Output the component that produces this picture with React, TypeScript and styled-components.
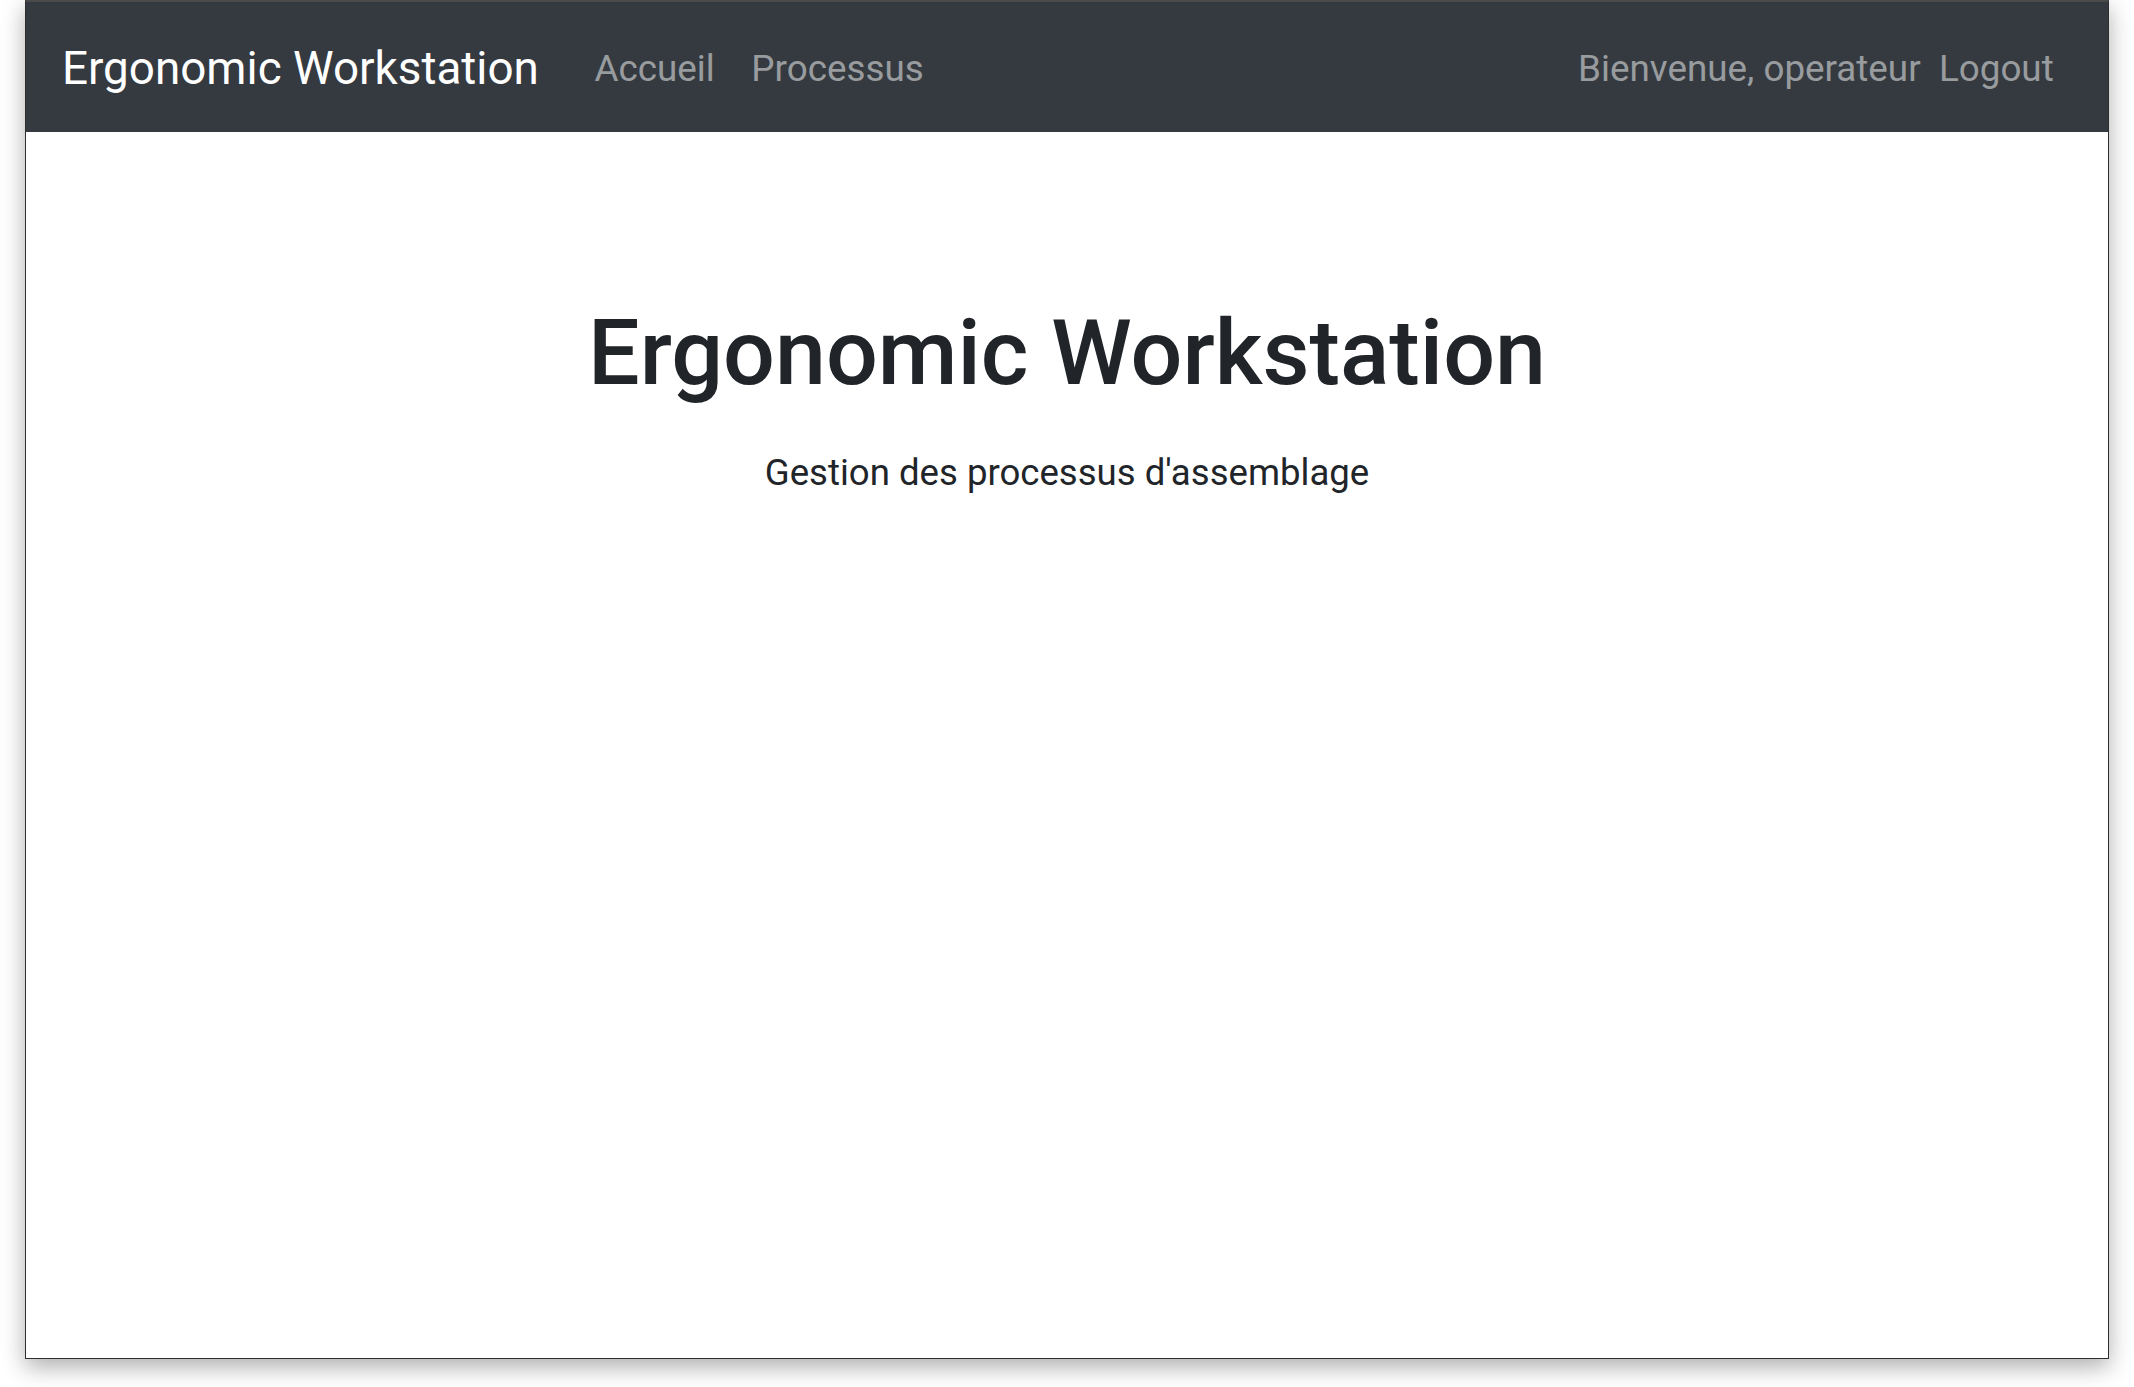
import React from "react";
import styled, { createGlobalStyle } from "styled-components";

const GlobalStyle = createGlobalStyle`
  html, body {
    margin: 0;
    padding: 0;
    background: #ffffff;
    font-family: Roboto, "Liberation Sans", Arial, sans-serif;
    -webkit-font-smoothing: antialiased;
  }
  * { box-sizing: border-box; }
`;

const Page = styled.div`
  width: 2134px;
  height: 1387px;
  padding: 0 25px 0 25px;
  background: #ffffff;
`;

const Frame = styled.div`
  width: 2084px;
  height: 1359px;
  border: 1px solid #2e2e2e;
  border-top: 2px solid #4b4b4b;
  background: #ffffff;
  box-shadow: 0 8px 22px rgba(0, 0, 0, 0.32);
  display: flex;
  flex-direction: column;
`;

const Navbar = styled.nav`
  height: 130px;
  flex: none;
  background: #343a40;
  display: flex;
  align-items: center;
  padding: 4px 36px 0;
`;

const Brand = styled.a`
  font-size: 45.8px;
  line-height: 1.5;
  color: #ffffff;
  text-decoration: none;
  margin-right: 37.4px;
  white-space: nowrap;
`;

const NavList = styled.div`
  display: flex;
  align-items: center;
`;

const NavLink = styled.a`
  font-size: 36.8px;
  line-height: 1.5;
  color: rgba(255, 255, 255, 0.5);
  text-decoration: none;
  padding: 0 18.3px;
  white-space: nowrap;
`;

const NavText = styled.span`
  font-size: 36.8px;
  line-height: 1.5;
  color: rgba(255, 255, 255, 0.5);
  white-space: nowrap;
`;

const Spacer = styled.div`
  flex: 1;
`;

const Main = styled.main`
  display: flex;
  flex-direction: column;
  align-items: center;
  padding-top: 166px;
  text-align: center;
`;

const Title = styled.h1`
  margin: 0 0 38px;
  font-size: 91.5px;
  line-height: 1.2;
  font-weight: 500;
  color: #212529;
`;

const Lead = styled.p`
  margin: 0;
  font-size: 36.6px;
  line-height: 1.5;
  font-weight: 400;
  color: #212529;
`;

export default function App() {
  return (
    <>
      <GlobalStyle />
      <Page>
        <Frame>
          <Navbar>
            <Brand href="#">Ergonomic Workstation</Brand>
            <NavList>
              <NavLink href="#">Accueil</NavLink>
              <NavLink href="#">Processus</NavLink>
            </NavList>
            <Spacer />
            <NavList>
              <NavText>Bienvenue, operateur</NavText>
              <NavLink href="#">Logout</NavLink>
            </NavList>
          </Navbar>
          <Main>
            <Title>Ergonomic Workstation</Title>
            <Lead>Gestion des processus d'assemblage</Lead>
          </Main>
        </Frame>
      </Page>
    </>
  );
}
